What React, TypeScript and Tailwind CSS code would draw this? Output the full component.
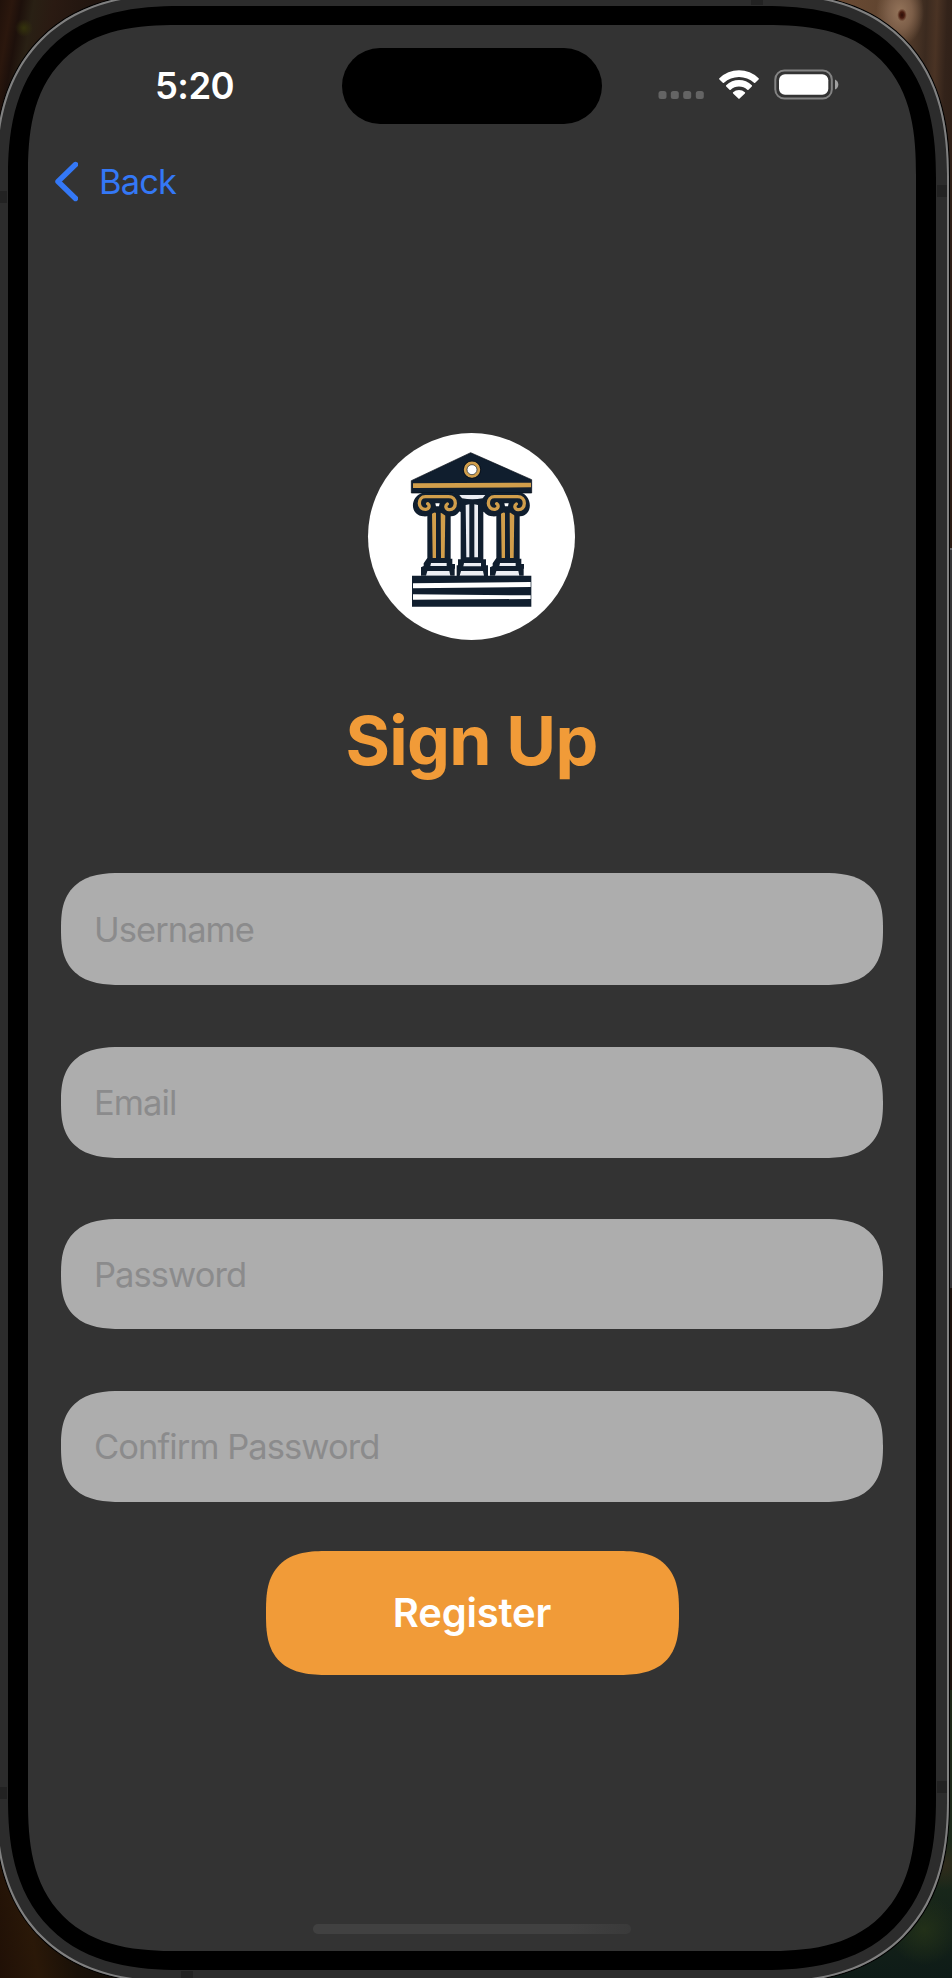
import React from "react";

const fields = [
  { label: "Username", type: "text", height: "h-[112px]", gap: "" },
  { label: "Email", type: "email", height: "h-[111px]", gap: "mt-[61.5px]" },
  { label: "Password", type: "password", height: "h-[110px]", gap: "mt-[61.5px]" },
  { label: "Confirm Password", type: "password", height: "h-[110.5px]", gap: "mt-[62px]" },
];

const NAVY = "#101e2e";
const GOLD = "#d19e4b";

function Capital({ x }: { x: number }) {
  return (
    <g transform={`translate(${x} 0)`}>
      {/* column shaft and base */}
      <path d="M202 250h70v150h5v16h8v14h-1v21H183v-25l8-4v-8l11-16z" fill={NAVY} />
      <path d="M216 264q8-6 12 0v134h-10zM242 262q8-8 14-2l-2 138h-11z" fill={GOLD} />
      <path d="M213 413h47v9h-49zM202 437h66l3 14h-73z" fill="#eceef3" />
      {/* scroll capital */}
      <path d="M186 203h94c30 14 32 66-6 70-24 2-26-14-42-14s-18 16-42 14c-42-4-40-58-4-70z" fill={NAVY} />
      <path
        d="M203 235c8 6 4 16-5 17-12 1-20-8-20-18 0-12 7-20 18-20h70c12 0 20 8 20 20 0 12-8 20-19 19-9-1-13-11-5-17"
        fill="none"
        stroke={GOLD}
        strokeWidth="10"
        strokeLinecap="round"
      />
      <path d="M226 234h13l-2 9h-9z" fill="#fff" />
    </g>
  );
}

function Logo() {
  return (
    <svg viewBox="26 24 621 621" className="size-[207px] rounded-full bg-white" aria-label="Temple">
      <g transform="translate(2 1)">
        <path d="M332 82L515 163v40H154v-37z" fill={NAVY} stroke="#050b14" strokeWidth="2" />
        <path d="M159 174l354-2v14l-354 2z" fill={GOLD} />
        <circle cx="336" cy="133" r="20" fill="#fff" stroke={GOLD} strokeWidth="10" />
        <circle cx="336" cy="133" r="15" fill="none" stroke={NAVY} strokeWidth="2" />
        <circle cx="336" cy="133" r="26" fill="none" stroke="#050b14" strokeWidth="2" />
        <path d="M280 200h112v50l-22 10v142h8v18h6v32H290v-32h4v-18h8V260l-22-10z" fill={NAVY} />
        <path d="M298 209h78l-8 10q-31 6-62 0z" fill="#eceef3" />
        <path d="M317 239l11-2v159h-9zM343 237l11 2v157h-11z" fill="#eceef3" />
        <path d="M312 413h51v10h-53zM303 437h66l3 14h-73z" fill="#eceef3" />
        <Capital x={0} />
        <Capital x={207} />
        <path d="M156 451h358v93H156z" fill={NAVY} />
        <path d="M159 474l353-4v15l-353 4zM159 507l353 3v11l-353 2z" fill="#fff" />
      </g>
    </svg>
  );
}

function StatusIcons() {
  return (
    <svg viewBox="0 0 182 32" className="h-8 w-[182px]" fill="none">
      <g fill="#646464">
        <rect x="0.500" y="22" width="8" height="8" rx="2.5" />
        <rect x="12.800" y="22" width="8" height="8" rx="2.5" />
        <rect x="25.200" y="22" width="8" height="8" rx="2.5" />
        <rect x="37.800" y="22" width="8" height="8" rx="2.5" />
      </g>
      <g fill="#fff">
        <path d="M61.4 9.200a28 28 0 0 1 39.2 0q.6.6 0 1.200l-3.400 3.400q-.6.6-1.200 0a22 22 0 0 0-30 0q-.6.6-1.200 0l-3.400-3.400q-.6-.6 0-1.200z" />
        <path d="M68.200 16.200a18.400 18.400 0 0 1 25.600 0q.6.6 0 1.200l-3.300 3.300q-.6.6-1.200 0a12.400 12.400 0 0 0-16.600 0q-.6.6-1.200 0l-3.300-3.300q-.6-.6 0-1.200z" />
        <path d="M75.100 23.200a8.800 8.800 0 0 1 11.800 0q.6.6 0 1.200l-5.300 5.200q-.6.6-1.200 0l-5.300-5.200q-.6-.6 0-1.200z" />
      </g>
      <rect x="117.300" y="1.500" width="56.500" height="28" rx="9" stroke="#838383" strokeWidth="2" />
      <rect x="121" y="5.200" width="49.300" height="20.600" rx="6" fill="#fff" />
      <path d="M177 10.500q3.300 1.500 3.300 5t-3.300 5z" fill="#a0a0a0" />
    </svg>
  );
}

function Backdrop() {
  return (
    <div className="absolute inset-0 flex flex-col justify-between bg-[#1b120d]">
      <div className="flex justify-between">
        <div className="h-40 w-32 bg-[radial-gradient(circle_at_24px_28px,#34330c_0,transparent_9px),linear-gradient(100deg,#20110a_0%,#2b170d_8%,#1d100b_14%,#292014_22%,#2a1a12_35%,#21150f_60%)]" />
        <div className="flex w-32 flex-col">
          <div className="h-[548px] bg-[radial-gradient(ellipse_3px_4px_at_78px_15px,#2b0f08_0,#4a1d10_80%,transparent_160%),radial-gradient(ellipse_24px_34px_at_76px_12px,#94745a_0,#7d5f49_50%,transparent_100%),linear-gradient(92deg,#6d4c34_0%,#5d432f_52%,#3b2a1f_70%,#4a3324_77%,#33231a_84%,#2a1b13_100%)]" />
          <div className="h-[740px] border-t-2 border-[#656568] bg-[#363638]" />
        </div>
      </div>
      <div className="flex items-end justify-between">
        <div className="h-40 w-32 bg-[linear-gradient(80deg,#201006,#2a1808_25%,#191007_50%,#0d0a07)]" />
        <div className="h-72 w-32 bg-[radial-gradient(circle_at_100px_240px,#223018_0,transparent_35px),radial-gradient(circle_at_120px_175px,#302b1b_0,transparent_25px),linear-gradient(#1d2817,#1b2a1b_60%,#0e1b17)]" />
      </div>
    </div>
  );
}

export default function App() {
  return (
    <div className="relative h-[1978px] w-[952px] overflow-hidden font-[Inter,sans-serif]">
      <Backdrop />
      <div className="relative -mt-[8px] -ml-[6px] h-[1992px] w-[956px] rounded-[150px] border border-black bg-[#2c2c2c] supports-[corner-shape:squircle]:rounded-[185px] supports-[corner-shape:squircle]:[corner-shape:superellipse(1.28)]">
        <div className="h-full w-full rounded-[149px] border-2 border-[#808080] p-[11px] supports-[corner-shape:squircle]:rounded-[184px] supports-[corner-shape:squircle]:[corner-shape:superellipse(1.28)]">
          <span className="absolute top-[198px] left-[2px] h-3 w-[10px] bg-[#222222]" />
          <span className="absolute top-[1794px] left-[2px] h-3 w-[10px] bg-[#222222]" />
          <span className="absolute top-[192px] right-[2px] h-3 w-[10px] bg-[#222222]" />
          <span className="absolute top-[1788px] right-[2px] h-3 w-[10px] bg-[#222222]" />
          <span className="absolute top-[3px] left-[756px] h-[9px] w-3 bg-[#222222]" />
          <span className="absolute bottom-[3px] left-[186px] h-[9px] w-3 bg-[#222222]" />
          <div className="h-full w-full rounded-[140px] bg-black px-[20px] py-[19px] supports-[corner-shape:squircle]:rounded-[172px] supports-[corner-shape:squircle]:[corner-shape:superellipse(1.31)]">
            <main className="relative flex h-full w-full flex-col items-center rounded-[120px] bg-[#333333] supports-[corner-shape:squircle]:rounded-[150px] supports-[corner-shape:squircle]:[corner-shape:superellipse(1.38)]">
              <header className="flex h-[136px] w-full items-start justify-between pt-[23px]">
                <time className="w-[314px] pt-[14px] pl-[127px] text-[36.500px] leading-[48px] font-semibold tracking-[-0.6px] text-white">5:20</time>
                <div className="h-[76px] w-[260px] rounded-full bg-black" />
                <div className="flex w-[314px] justify-end pt-[21px] pr-[76px]">
                  <StatusIcons />
                </div>
              </header>
              <nav className="flex w-full items-center gap-[21px] pl-[26px] text-[#3478f6]">
                <svg viewBox="0 0 24 42" className="h-[42px] w-[24px]" fill="none" stroke="currentColor" strokeWidth="5.400" strokeLinecap="round" strokeLinejoin="round">
                  <path d="M21.500 3.500L4 20.500L21.500 37.500" />
                </svg>
                <span className="text-[34.500px] leading-[42px] tracking-[-0.9px]">Back</span>
              </nav>
              <div className="mt-[230px] mr-px">
                <Logo />
              </div>
              <h1 className="mt-[60px] mr-px text-[68px] leading-[80px] font-bold tracking-[-0.7px] text-[#f19b38]">Sign Up</h1>
              <form className="flex w-full flex-col items-center px-[33px] pt-[93px]" onSubmit={(e) => e.preventDefault()}>
                {fields.map((f) => (
                  <input
                    key={f.label}
                    type={f.type}
                    placeholder={f.label}
                    className={`${f.height} ${f.gap} w-full rounded-[46px] bg-[#adadad] px-[33px] text-[34.500px] tracking-[-0.95px] text-black placeholder:text-[#8b8b8c] supports-[corner-shape:squircle]:rounded-[60px/55px] supports-[corner-shape:squircle]:[corner-shape:superellipse(1.4)]`}
                  />
                ))}
                <button className="mt-[49px] h-[124px] w-[413px] rounded-[46px] bg-[#f19b38] text-[40px] font-semibold tracking-[-0.2px] text-white supports-[corner-shape:squircle]:rounded-[62px/60px] supports-[corner-shape:squircle]:[corner-shape:superellipse(1.45)]">
                  Register
                </button>
              </form>
              <div className="mt-auto mb-[17px] h-[10px] w-[318px] rounded-full bg-[linear-gradient(90deg,#414141_80%,#3a3a3a)]" />
            </main>
          </div>
        </div>
      </div>
    </div>
  );
}
